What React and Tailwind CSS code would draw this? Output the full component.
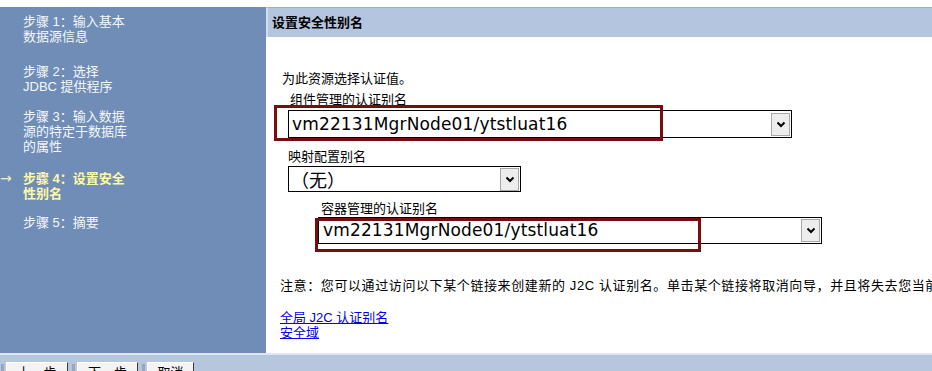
import React from 'react';

const cjk = { fontFamily: '"Liberation Sans", "Noto Sans CJK SC", sans-serif' };

const steps = [
    { lines: ['步骤 1：输入基本', '数据源信息'], gap: 'mt-[7px]' },
    { lines: ['步骤 2：选择', 'JDBC 提供程序'], gap: 'mt-[20px]' },
    { lines: ['步骤 3：输入数据', '源的特定于数据库', '的属性'], gap: 'mt-[15px]' },
    { lines: ['步骤 4：设置安全', '性别名'], gap: 'mt-[17px]', current: true },
    { lines: ['步骤 5：摘要'], gap: 'mt-[14px]' },
];

const Chevron = () => (
    <svg width="10" height="7" viewBox="0 0 10 7">
        <path d="M1.5 1.5 L5 5 L8.5 1.5" fill="none" stroke="#000" strokeWidth="2" />
    </svg>
);

// fake dropdown, looks like the old IE select box
const SelectBox = ({ value, className, valueClass, valueFont }) => (
    <div className={`flex items-center justify-between border border-black bg-white ${className}`}>
        <span className={`pl-[2px] leading-none text-black whitespace-nowrap ${valueClass}`} style={{ fontFamily: valueFont }}>
            {value}
        </span>
        <div className="mr-[1px] flex h-[23px] w-[19px] items-center justify-center border border-[#a7a7a7] bg-[#ededed]">
            <Chevron />
        </div>
    </div>
);

const WizardButton = ({ label, className }) => (
    <div className="flex items-start">
        <div className="mt-[2px] h-[14px] w-[3px] bg-[#9aa7b8]" />
        <div
            className={`ml-[2px] h-[22px] border border-t-white border-l-white border-r-[#3a3a3a] border-b-[#3a3a3a] bg-[#f3f3f3] pt-[2px] text-center text-[13px] leading-[16px] text-black ${className}`}
        >
            {label}
        </div>
    </div>
);

const App = () => {
    return (
        <div className="relative h-[371px] w-[932px] overflow-hidden bg-white pt-[7px]" style={cjk}>
            <div className="flex h-[346px]">
                {/* left wizard steps */}
                <div className="w-[266px] shrink-0 bg-[#6f8db7]">
                    {steps.map((step, i) => (
                        <div key={i} className={`flex ${step.gap}`}>
                            <div
                                className={`w-[23px] text-[14px] leading-[15px] ${step.current ? 'text-[#f3edb8]' : ''}`}
                                style={{ fontFamily: '"DejaVu Sans", sans-serif' }}
                            >
                                {step.current ? '→' : ''}
                            </div>
                            <div
                                className={`text-[13px] leading-[15px] ${step.current ? 'font-bold text-[#fff8a6]' : 'text-[#f5f7fb]'}`}
                            >
                                {step.lines.map((line, j) => (
                                    <div key={j}>{line}</div>
                                ))}
                            </div>
                        </div>
                    ))}
                </div>

                {/* main panel */}
                <div className="flex min-w-0 flex-1 flex-col">
                    <div className="flex h-[30px] shrink-0 items-center border-t border-l-2 border-t-[#9cb0cd] border-l-[#d3ddeb] bg-[#b4c6df] pl-[4px]">
                        <span className="text-[13px] font-bold text-black">设置安全性别名</span>
                    </div>
                    <div className="flex-1 pl-[14px] text-[13px] text-black">
                        <div className="ml-[2px] mt-[34px] leading-[16px]">为此资源选择认证值。</div>
                        <div className="ml-[10px] mt-[5px] leading-[16px]">组件管理的认证别名</div>
                        <SelectBox
                            value="vm22131MgrNode01/ytstluat16"
                            valueFont='"DejaVu Sans", sans-serif'
                            valueClass="text-[17px] tracking-[0.15px]"
                            className="ml-[8px] mt-[2px] h-[28px] w-[504px] pl-[1px]"
                        />
                        <div className="ml-[8px] mt-[11px] leading-[16px]">映射配置别名</div>
                        <SelectBox
                            value="（无）"
                            valueFont='"Noto Sans CJK SC", sans-serif'
                            valueClass="text-[18px]"
                            className="ml-[8px] mt-[1px] h-[26px] w-[233px]"
                        />
                        <div className="ml-[41px] mt-[9px] leading-[16px]">容器管理的认证别名</div>
                        <SelectBox
                            value="vm22131MgrNode01/ytstluat16"
                            valueFont='"DejaVu Sans", sans-serif'
                            valueClass="text-[17px] tracking-[0.15px]"
                            className="ml-[38px] h-[27px] w-[504px] pl-[2px]"
                        />
                        <div className="mt-[34px] whitespace-nowrap leading-[16px] tracking-[0.6px]">
                            注意：您可以通过访问以下某个链接来创建新的 J2C 认证别名。单击某个链接将取消向导，并且将失去您当前在此向导中输入的所有信息。
                        </div>
                        <div className="mt-[16px] leading-[15px]">
                            <a href="#" className="text-[#0000ee] underline">全局 J2C 认证别名</a>
                        </div>
                        <div className="leading-[15px]">
                            <a href="#" className="text-[#0000ee] underline">安全域</a>
                        </div>
                    </div>
                </div>
            </div>

            {/* bottom button bar */}
            <div className="h-[2px] bg-[#dfe5ee]" />
            <div className="flex h-[20px] gap-[4px] bg-[#b5c6dd] pl-[1px] pt-[7px]">
                <WizardButton label="上一步" className="w-[62px]" />
                <WizardButton label="下一步" className="w-[61px]" />
                <WizardButton label="取消" className="w-[47px]" />
            </div>

            {/* red highlight boxes drawn over the form */}
            <div className="absolute left-[274px] top-[105px] h-[36px] w-[389px] border-[3px] border-[#7a0b0f]" />
            <div className="absolute left-[315px] top-[218px] h-[34px] w-[386px] border-[3px] border-[#7a0b0f]" />
        </div>
    );
};

export default App;
